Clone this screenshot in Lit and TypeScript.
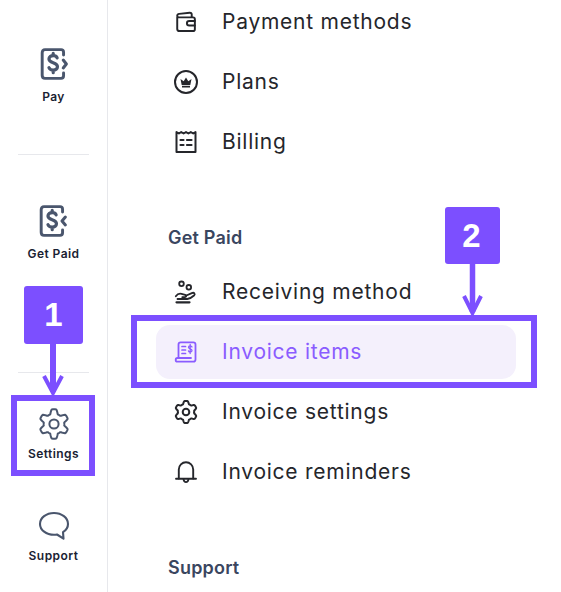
import { LitElement, html, css, svg } from "lit";
import { customElement } from "lit/decorators.js";

const cogPath = (c: number, r0: number, amp: number) => {
  const pts: string[] = [];
  for (let i = 0; i < 144; i++) {
    const t = (i / 144) * Math.PI * 2;
    const wave = Math.max(-1, Math.min(1, 1.7 * Math.cos(6 * t)));
    const r = r0 + amp * wave;
    pts.push(`${(c + r * Math.sin(t)).toFixed(2)} ${(c - r * Math.cos(t)).toFixed(2)}`);
  }
  return `M${pts.join("L")}Z`;
};

const payIcon = (dir: "out" | "in") => html`<svg class="rail-icon" viewBox="-1 -1 32 32" fill="none" stroke="currentColor" stroke-width="2.6" stroke-linecap="round" stroke-linejoin="round">
  <path d="M23.5 7V4.500C23.5 3.100 22.700 2.200 21.300 2.200H7C5.400 2.200 4.500 3.200 4.500 5v20c0 1.800.9 2.800 2.500 2.800h14.300c1.400 0 2.200-.9 2.200-2.300V23"/>
  <path d="M17.800 9.600C17.300 8.300 16.100 7.600 14.300 7.600c-2.200 0-3.800 1.200-3.800 3 0 4 7.600 2.600 7.600 6.800 0 1.800-1.600 3-3.800 3-1.900 0-3.200-.8-3.800-2.200M14.300 5.400v2.200M14.300 20.400v2.400" stroke-width="2.800"/>
  ${dir === "out" ? svg`<path d="M23.200 11.500l2.800 3.500-2.800 3.500" stroke-width="2.700"/>` : svg`<path d="M26 11.500l-3 3.500 3 3.500" stroke-width="2.700"/>`}
</svg>`;

const gear = html`<svg class="rail-icon small" viewBox="0 0 32 32" fill="none" stroke="currentColor" stroke-width="2" stroke-linejoin="round">
  <path d="${cogPath(16, 12.5, 2.2)}"/>
  <circle cx="16" cy="16" r="4.600"/>
</svg>`;

const bubble = html`<svg class="rail-icon small" viewBox="0 0 32 32" fill="none" stroke="currentColor" stroke-width="2.100" stroke-linejoin="round">
  <path d="M16 3C8.300 3 2 7.800 2 13.900S8.300 24.800 16 24.800c1 0 2-.1 3-.3l6.500 4.200-.5-6.500c3-2 5-5 5-8.300C30 7.800 23.700 3 16 3z"/>
</svg>`;

const wallet = html`<svg class="icon" viewBox="-1 -1 26 26" fill="none" stroke="currentColor" stroke-width="2.100" stroke-linejoin="round" stroke-linecap="round">
  <path d="M2.500 6.500V19.500c0 1.400 1 2.300 2.400 2.300h14.700c1.300 0 2-.8 2-2V9c0-1.200-.7-2-2-2H4.800C3.500 7 2.500 6.300 2.500 5.300S3.300 3.400 4.600 3.200L16 2c1.300-.1 2.200.5 2.200 1.800V7"/>
  <path d="M21.500 11h-6c-1.500 0-2.500 1-2.500 2.400s1 2.400 2.500 2.400h6"/>
</svg>`;

const crown = html`<svg class="icon" viewBox="0 0 24 24" fill="none" stroke="currentColor" stroke-width="2">
  <circle cx="12" cy="12" r="11"/>
  <path d="M6.500 9l3.200 2.300L12 7.500l2.300 3.800L17.500 9l-1.200 6H7.700z" fill="currentColor" stroke="none"/>
  <rect x="8" y="15.800" width="8" height="1.700" fill="currentColor" stroke="none"/>
</svg>`;

const receipt = html`<svg class="icon" viewBox="0 0 24 24" fill="none" stroke="currentColor" stroke-width="2" stroke-linecap="round" stroke-linejoin="round">
  <path d="M2.500 2l2.400 1.500L7.200 2l2.400 1.500L12 2l2.400 1.500L16.800 2l2.400 1.500L21.500 2v20h-19z"/>
  <path d="M6.500 10h3M13 10h4.500M6.500 15h3M13 15h4.500" stroke-width="2.200"/>
</svg>`;

const hand = html`<svg class="icon" viewBox="0 0 24 24" fill="none" stroke="currentColor" stroke-width="1.800" stroke-linecap="round" stroke-linejoin="round">
  <circle cx="7.500" cy="3.800" r="2.300"/>
  <circle cx="14.800" cy="7.300" r="2.300"/>
  <path d="M1.800 16.300c1.500-2.200 3.700-3 5.700-2.500l3.700 1c1.400.4 1.300 2.300-.3 2.400H8.300"/>
  <path d="M11.800 15.800l6-2.700c2.300-1 3.800.8 2.200 2.400-2 1.900-4.300 3.100-6.800 3.500H3.500"/>
  <path d="M2.500 22.300h13" stroke-width="2.200"/>
</svg>`;

const invoiceIcon = html`<svg class="icon" viewBox="0 0 24 24" fill="none" stroke="currentColor" stroke-width="1.800" stroke-linecap="round" stroke-linejoin="round">
  <path d="M4.500 18V4.500c0-1.400.8-2.200 2.200-2.200h12.600c1.400 0 2.200.8 2.200 2.200v15c0 1.400-.8 2.200-2.200 2.200H3.500c-1.200 0-1.800-.8-1.800-1.800s.6-1.900 1.800-1.900H17"/>
  <path d="M8 6.500h3.500M8 10h3.500M8 13.500h3.500" stroke-width="1.700"/>
  <path d="M18 7c-.3-.8-1-1.200-1.800-1.200-1 0-1.700.6-1.700 1.500 0 2 3.500 1.300 3.500 3.300 0 .9-.7 1.500-1.700 1.500-.9 0-1.500-.4-1.800-1.200M16.200 4.500v9" stroke-width="1.300"/>
</svg>`;

const smallGear = html`<svg class="icon" viewBox="0 0 24 24" fill="none" stroke="currentColor" stroke-width="2" stroke-linejoin="round">
  <path d="${cogPath(12, 9.6, 1.4)}"/>
  <circle cx="12" cy="12" r="3.300"/>
</svg>`;

const bell = html`<svg class="icon" viewBox="0 0 24 24" fill="none" stroke="currentColor" stroke-width="1.900" stroke-linecap="round" stroke-linejoin="round">
  <path d="M4.800 18.500V9.500a7.200 7.200 0 0 1 14.400 0v9"/>
  <path d="M2 18.800h20"/>
  <path d="M9.600 19.500c.2 1.600 1.100 2.600 2.400 2.600s2.200-1 2.400-2.600"/>
</svg>`;

@customElement("app-root")
export class AppRoot extends LitElement {
  static styles = css`
    :host {
      display: flex;
      position: relative;
      width: 561px;
      height: 592px;
      overflow: hidden;
      background: #fff;
      font-family: Inter, "Liberation Sans", sans-serif;
    }
    .rail {
      flex: none;
      width: 107px;
      height: 592px;
      border-right: 1px solid #e7e8ec;
      display: flex;
      flex-direction: column;
      align-items: center;
      padding-top: 46px;
      box-sizing: content-box;
    }
    .rail-item {
      display: flex;
      flex-direction: column;
      align-items: center;
      gap: 7px;
      color: #4a566d;
    }
    .rail-item.pay { margin-bottom: 49px; }
    .rail-item.get { margin-top: 48px; margin-bottom: 110px; }
    .rail-item.settings { margin-top: 35px; gap: 6px; }
    .rail-item.support { margin-top: 48px; gap: 6px; }
    .rail-icon { width: 36px; height: 36px; display: block; }
    .rail-icon.small { width: 32px; height: 32px; }
    .rail-label {
      font-size: 12px;
      font-weight: 600;
      letter-spacing: 0.45px;
      line-height: 16px;
      color: #1a2233;
    }
    .rail hr {
      width: 71px;
      height: 1px;
      border: 0;
      background: #e7e8ec;
      margin: 0;
    }
    .menu {
      flex: 1;
      padding: 0 45px 0 48px;
      margin-top: -5px;
      display: flex;
      flex-direction: column;
    }
    .row {
      height: 54px;
      flex: none;
      margin-bottom: 6px;
      padding-left: 18px;
      display: flex;
      align-items: center;
      gap: 24px;
      border-radius: 14px;
      color: #25262b;
      font-size: 21px;
      letter-spacing: 0.75px;
      line-height: 30px;
    }
    .row.active { background: #f4f0fc; color: #8a5cff; }
    .icon { width: 24px; height: 24px; flex: none; }
    .head {
      margin: 0;
      padding-left: 12px;
      font-size: 18px;
      font-weight: 600;
      letter-spacing: 0.2px;
      line-height: 26px;
      color: #3a465f;
    }
    .head.a { margin-top: 50px; margin-bottom: 14px; }
    .head.b { margin-top: 50px; }

    .callout {
      position: absolute;
      display: flex;
      align-items: center;
      justify-content: center;
      background: #7c4fff;
      border-radius: 3px;
      color: #fff;
      font-family: "Liberation Sans", Arial, sans-serif;
      font-weight: 700;
      font-size: 33px;
    }
    .callout.one { left: 24px; top: 286px; width: 59px; height: 58px; }
    .callout.two { left: 445px; top: 207px; width: 53px; height: 57px; padding-right: 2px; }
    .frame {
      position: absolute;
      border: 6px solid #7c4fff;
      box-sizing: border-box;
    }
    .frame.one { left: 11px; top: 395px; width: 84px; height: 81px; }
    .frame.two { left: 131px; top: 315px; width: 406px; height: 73px; }
    .arrows {
      position: absolute;
      left: 0;
      top: 0;
      width: 561px;
      height: 592px;
      pointer-events: none;
    }
  `;

  render() {
    return html`
      <nav class="rail">
        <div class="rail-item pay">${payIcon("out")}<span class="rail-label">Pay</span></div>
        <hr />
        <div class="rail-item get">${payIcon("in")}<span class="rail-label">Get Paid</span></div>
        <hr />
        <div class="rail-item settings">${gear}<span class="rail-label">Settings</span></div>
        <div class="rail-item support">${bubble}<span class="rail-label">Support</span></div>
      </nav>
      <main class="menu">
        <div class="row">${wallet}<span>Payment methods</span></div>
        <div class="row">${crown}<span>Plans</span></div>
        <div class="row">${receipt}<span>Billing</span></div>
        <h3 class="head a">Get Paid</h3>
        <div class="row">${hand}<span>Receiving method</span></div>
        <div class="row active">${invoiceIcon}<span>Invoice items</span></div>
        <div class="row">${smallGear}<span>Invoice settings</span></div>
        <div class="row">${bell}<span>Invoice reminders</span></div>
        <h3 class="head b">Support</h3>
      </main>
      <div class="frame one"></div>
      <div class="frame two"></div>
      <div class="callout one">1</div>
      <div class="callout two">2</div>
      <svg class="arrows" viewBox="0 0 561 592" fill="none" stroke="#7c4fff">
        <path d="M53 343V392" stroke-width="6"/>
        <path d="M44 376L53 393L62 376" stroke-width="4"/>
        <path d="M472.500 264V312" stroke-width="5.500"/>
        <path d="M464 296L472.500 313L481 296" stroke-width="4"/>
      </svg>
    `;
  }
}
